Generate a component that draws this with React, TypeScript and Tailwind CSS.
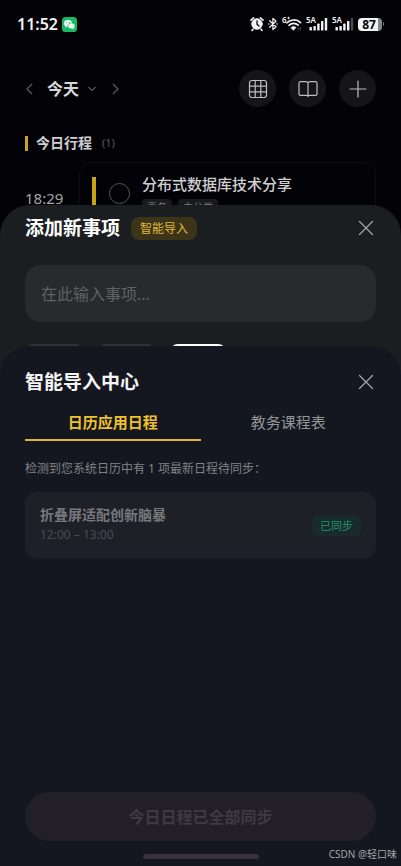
import React from "react";

function CloseIcon() {
  return (
    <svg viewBox="0 0 16 16" className="size-4" fill="none" stroke="#a6a8ab" strokeWidth="1.2" strokeLinecap="round">
      <path d="M1.5 1.5 14.5 14.5M14.5 1.5 1.5 14.5" />
    </svg>
  );
}

function Signal({ faded }: { faded: boolean }) {
  return (
    <span className="relative block h-4 w-[22px]">
      <span className="absolute left-0 top-0 text-[8px] font-semibold leading-[8px]">5A</span>
      <svg viewBox="0 0 22 16" className="block h-4 w-[22px]" fill="#f4f4f6">
        <rect x="3.5" y="11" width="2.4" height="3.5" rx="0.6" />
        <rect x="7.4" y="10" width="2.4" height="4.5" rx="0.6" />
        <rect x="11.2" y="7.6" width="2.4" height="6.9" rx="0.6" />
        <rect x="15" y="5" width="2.4" height="9.5" rx="0.6" />
        <rect x="18.8" y="2" width="2.4" height="12.5" rx="0.6" fillOpacity={faded ? 0.3 : 1} />
      </svg>
    </span>
  );
}

function StatusBar() {
  return (
    <div className="flex h-12 items-center justify-between px-[17px] text-[#f4f4f6]">
      <div className="flex items-center gap-1">
        <span className="text-base font-semibold leading-5">11:52</span>
        <svg viewBox="0 0 15 15" className="size-[15px]">
          <rect width="15" height="15" rx="3.6" fill="#16b862" />
          <ellipse cx="6" cy="6.2" rx="4" ry="3.3" fill="#f2fff7" />
          <path d="M3.6 8.4 3.1 10.4 5.4 9.2Z" fill="#f2fff7" />
          <ellipse cx="9.4" cy="8.9" rx="3.5" ry="2.9" fill="#f2fff7" stroke="#16b862" strokeWidth="0.6" />
          <path d="M11.4 10.8 11.9 12.4 9.9 11.5Z" fill="#f2fff7" />
          <g fill="#16b862">
            <circle cx="4.7" cy="5.4" r="0.5" />
            <circle cx="7.3" cy="5.4" r="0.5" />
            <circle cx="8.3" cy="8.2" r="0.4" />
            <circle cx="10.5" cy="8.2" r="0.4" />
          </g>
        </svg>
      </div>
      <div className="flex items-center gap-1">
        <svg viewBox="0 0 14 16" className="h-4 w-[14px]" fill="none" stroke="#f4f4f6" strokeLinecap="round">
          <circle cx="7" cy="8" r="5.4" fill="#f4f4f6" strokeWidth="0.6" />
          <path d="M1 4.2 3.6 1.9M13 4.2 10.4 1.9M3 13.2 2 14.4M11 13.2 12 14.4" strokeWidth="1.6" />
          <path d="M7 4.8V8.3L9 10" stroke="#050509" strokeWidth="1.3" />
        </svg>
        <svg viewBox="0 0 10 16" className="h-4 w-[10px]" fill="none" stroke="#f4f4f6" strokeWidth="1.2" strokeLinejoin="round" strokeLinecap="round">
          <path d="M1.6 4.8 8 10.8 4.9 13.6V2.4L8 5.2 1.6 11.2" />
          <path d="M0.9 8h.1M9 8h.1" strokeWidth="1.4" />
        </svg>
        <span className="relative block h-4 w-5">
          <span className="absolute left-0 top-0 text-[8px] font-semibold leading-[8px]">6</span>
          <svg viewBox="0 0 20 16" className="block h-4 w-5" fill="none" stroke="#f4f4f6" strokeLinecap="round">
            <path d="M5.6 2h2M6.6 1v2" strokeWidth="0.8" />
            <path d="M5 6.8C8.6 3 15 3 18.6 6.6" strokeWidth="1.6" />
            <path d="M7 9.3C9.6 6.8 13.6 6.8 16.2 9.2" strokeWidth="1.6" />
            <path d="M9 11.6C10.5 10.2 12.5 10.2 14 11.6L11.5 14.2Z" fill="#f4f4f6" strokeWidth="0.6" />
            <path d="M16.3 11.5v2.5M18.3 11.5v2.5" strokeOpacity="0.3" strokeWidth="1" />
          </svg>
        </span>
        <Signal faded={false} />
        <Signal faded={true} />
        <span className="flex items-center gap-px">
          <span className="flex h-[13px] w-6 items-center justify-center rounded-[4px] bg-linear-to-r from-[#f4f4f6] from-85% to-[#85858a] to-85% pr-[2px] text-xs font-bold leading-[13px] text-[#050509]">
            87
          </span>
          <span className="h-1 w-px rounded-r bg-[#77777c]" />
        </span>
      </div>
    </div>
  );
}

function RoundButton({ label, children }: { label: string; children: React.ReactNode }) {
  return (
    <button aria-label={label} className="flex size-[37px] items-center justify-center rounded-full bg-[#151519]">
      <svg viewBox="0 0 20 20" className="size-5" fill="none" stroke="#bdbdc0" strokeWidth="1.2" strokeLinecap="round" strokeLinejoin="round">
        {children}
      </svg>
    </button>
  );
}

function Schedule() {
  return (
    <div className="px-[25px]">
      <header className="mt-[22px] flex items-center justify-between">
        <div className="flex items-center">
          <button aria-label="前一天" className="w-[22px]">
            <svg viewBox="0 0 8 12" className="h-3 w-2" fill="none" stroke="#5c5c61" strokeWidth="1.2">
              <path d="M7 1 2 6 7 11" />
            </svg>
          </button>
          <button className="flex items-center gap-2 text-base font-bold leading-6 text-[#d6d6d8]">
            今天
            <svg viewBox="0 0 10 6" className="h-[6px] w-[10px]" fill="none" stroke="#5c5c61" strokeWidth="1.1">
              <path d="M1.5 1 5 4.5 8.5 1" />
            </svg>
          </button>
          <button aria-label="后一天" className="ml-[15px]">
            <svg viewBox="0 0 8 12" className="h-3 w-2" fill="none" stroke="#5c5c61" strokeWidth="1.2">
              <path d="M1 1 6 6 1 11" />
            </svg>
          </button>
        </div>
        <div className="flex gap-[13px]">
          <RoundButton label="网格">
            <rect x="1.5" y="1.5" width="17" height="17" rx="2.5" />
            <path d="M7.2 1.5v17M12.8 1.5v17M1.5 7.2h17M1.5 12.8h17" />
          </RoundButton>
          <RoundButton label="日记">
            <path d="M10 4Q9.4 2.6 8 2.6H2.6Q1 2.6 1 4.2V14.8Q1 16.4 2.6 16.4H8.4Q9.6 16.4 10 17.4Q10.4 16.4 11.6 16.4H17.4Q19 16.4 19 14.8V4.2Q19 2.6 17.4 2.6H12Q10.6 2.6 10 4ZM10 4V17" />
          </RoundButton>
          <RoundButton label="添加">
            <path d="M10 2v16M2 10h16" />
          </RoundButton>
        </div>
      </header>

      <h2 className="mt-6 flex items-center text-sm font-bold leading-6 text-[#cfcfd2]">
        <span className="mr-2 h-[15px] w-[3px] bg-[#c9a227]" />
        今日行程
        <span className="ml-[10px] text-[11px] font-normal text-[#58585d]">(1)</span>
      </h2>

      <div className="mt-[7px] flex h-[72px] items-center">
        <time className="w-[54px] text-[15px] leading-5 text-[#a5a5a9]">18:29</time>
        <article className="flex h-full flex-1 rounded-xl border border-[#0e0e13] px-3 py-[14px]">
          <span className="h-full w-1 bg-[#c9a415]" />
          <input type="checkbox" aria-label="完成" className="ml-[13px] mt-[6px] size-[21px] appearance-none rounded-full border border-[#55555a]" />
          <div className="ml-3 -mt-1">
            <h3 className="text-[15px] font-medium leading-[22px] text-[#cfcfd2]">分布式数据库技术分享</h3>
            <div className="mt-1 flex gap-[6px] text-[10px] leading-4 text-[#77777c]">
              <span className="rounded-[4px] bg-[#19191e] px-[5px]">事务</span>
              <span className="rounded-[4px] bg-[#19191e] px-[5px]">未分类</span>
            </div>
          </div>
        </article>
      </div>
    </div>
  );
}

function AddSheet() {
  return (
    <section className="absolute inset-x-0 bottom-0 h-[661px] rounded-t-[30px] bg-[#1b1e20] px-[25px] pt-[9px]">
      <div className="flex items-center">
        <h2 className="text-[19px] font-bold leading-7 text-white">添加新事项</h2>
        <button className="ml-[11px] rounded-lg bg-[#3c3418] px-[9px] text-xs leading-[23px] text-[#e2b93a]">智能导入</button>
        <button aria-label="关闭" className="ml-auto mr-[2px]">
          <CloseIcon />
        </button>
      </div>
      <input
        type="text"
        aria-label="事项"
        placeholder="在此输入事项..."
        className="mt-[23px] block h-[57px] w-full rounded-2xl bg-[#272b2d] px-4 text-base outline-none placeholder:text-[#5e6264]"
      />
      <div className="mt-[22px] flex gap-[15px]">
        <span className="h-9 w-[58px] rounded-lg bg-[#303437]" />
        <span className="h-9 w-[57px] rounded-lg bg-[#303437]" />
        <span className="h-9 w-14 rounded-lg bg-white" />
      </div>
    </section>
  );
}

function ImportSheet() {
  return (
    <section className="absolute inset-x-0 bottom-0 flex h-[520px] flex-col rounded-t-[30px] bg-[#14171f] px-[25px] pb-[7px] pt-[22px]">
      <div className="flex items-center justify-between">
        <h2 className="text-[19px] font-bold leading-7 text-[#f4f4f5]">智能导入中心</h2>
        <button aria-label="关闭" className="mr-[2px]">
          <CloseIcon />
        </button>
      </div>
      <div role="tablist" className="mt-2 flex text-[15px]">
        <button role="tab" aria-selected="true" className="h-[37px] flex-1 border-b-2 border-[#e0b540] pt-[2px] font-bold text-[#edc12f]">
          日历应用日程
        </button>
        <button role="tab" aria-selected="false" className="h-[37px] flex-1 border-b-2 border-transparent pt-[2px] text-[#939498]">
          教务课程表
        </button>
      </div>
      <p className="mt-[18px] text-xs leading-5 text-[#818287]">检测到您系统日历中有 1 项最新日程待同步：</p>
      <article className="mt-[13px] flex h-[66px] items-center justify-between rounded-xl bg-[#1d2027] px-[15px]">
        <div>
          <h3 className="text-sm font-bold leading-5 text-[#77787c]">折叠屏适配创新脑暴</h3>
          <p className="text-xs leading-5 text-[#4d4a54]">12:00 – 13:00</p>
        </div>
        <span className="rounded-md bg-[#182a2c] px-2 text-[11px] leading-[21px] text-[#249468]">已同步</span>
      </article>
      <button disabled className="mt-auto h-[49px] w-full rounded-full bg-[#231f29] text-base font-bold text-[#3d3a43]">
        今日日程已全部同步
      </button>
      <div className="mx-auto mt-[13px] h-[5px] w-[116px] rounded-full bg-[#37313c]" />
    </section>
  );
}

export default function App() {
  return (
    <main
      lang="zh-CN"
      className="relative min-h-screen overflow-hidden bg-[#030307] font-['Noto_Sans','Noto_Sans_CJK_SC',sans-serif]"
    >
      <StatusBar />
      <Schedule />
      <AddSheet />
      <ImportSheet />
      <p className="absolute bottom-1 right-1 text-[10px] leading-4 text-[#a3a4a8]">CSDN @轻口味</p>
    </main>
  );
}
